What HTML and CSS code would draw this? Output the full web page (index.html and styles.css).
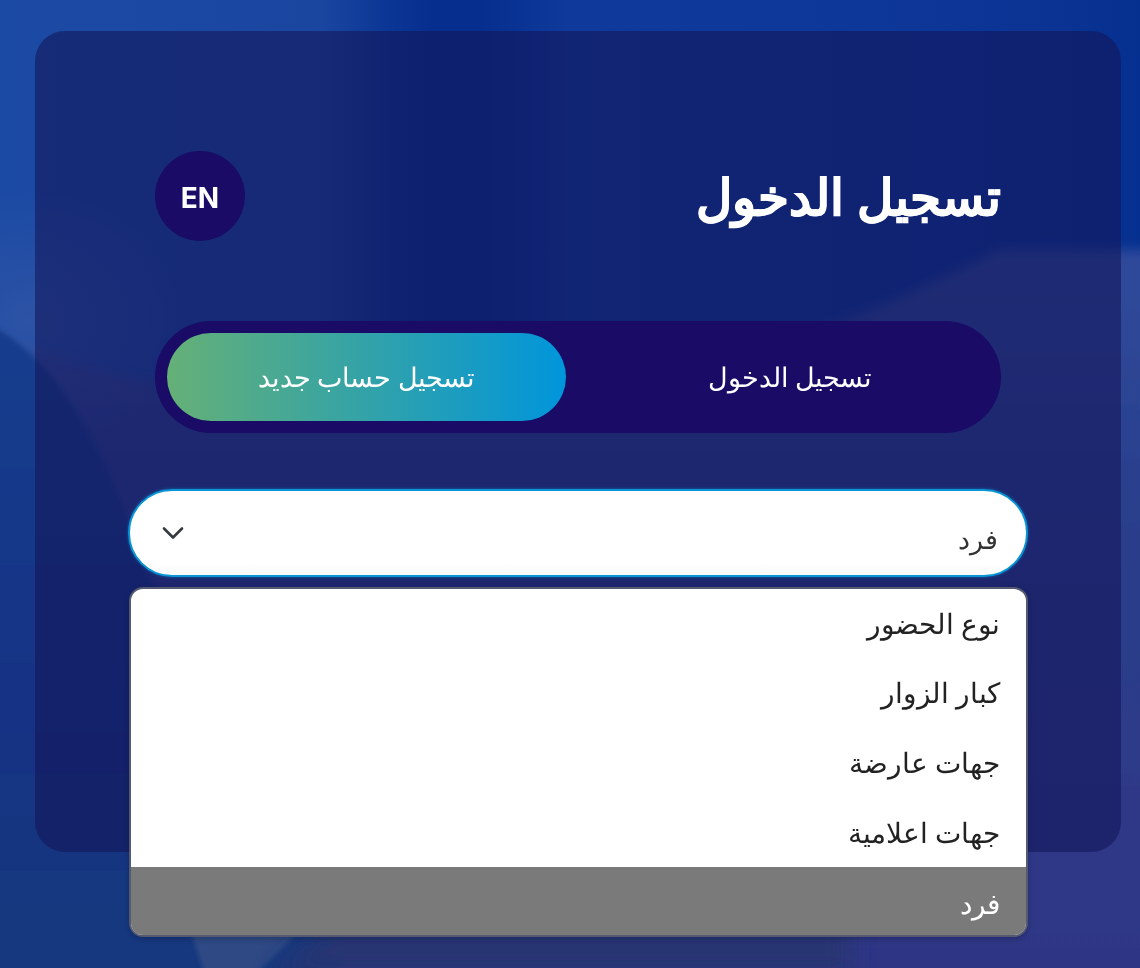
FILE: index.html
```html
<!DOCTYPE html>
<html lang="ar" dir="rtl">
<head>
<meta charset="utf-8">
<title>تسجيل الدخول</title>
<link rel="stylesheet" href="styles.css">
</head>
<body>
<svg class="bg" viewBox="0 0 1140 968" preserveAspectRatio="none" aria-hidden="true">
  <defs>
    <linearGradient id="top">
      <stop offset="0" stop-color="#1b4aa4"/>
      <stop offset=".28" stop-color="#1a46a0"/>
      <stop offset=".34" stop-color="#0c3695"/>
      <stop offset=".38" stop-color="#052e8e"/>
      <stop offset=".42" stop-color="#052e8e"/>
      <stop offset=".5" stop-color="#0f3a9b"/>
      <stop offset=".75" stop-color="#0d3798"/>
      <stop offset=".92" stop-color="#0a3394"/>
      <stop offset="1" stop-color="#06308f"/>
    </linearGradient>
    <linearGradient id="low" gradientUnits="userSpaceOnUse" x1="0" y1="250" x2="0" y2="968">
      <stop offset="0" stop-color="#2e4a9b"/>
      <stop offset=".4" stop-color="#2b3e8b"/>
      <stop offset="1" stop-color="#2f3685"/>
    </linearGradient>
    <linearGradient id="dark" x1="0" y1="0" x2="0" y2="1">
      <stop offset="0" stop-color="#143e8e"/>
      <stop offset=".6" stop-color="#163284"/>
      <stop offset="1" stop-color="#183a7e"/>
    </linearGradient>
    <radialGradient id="glow">
      <stop offset="0" stop-color="#3a5aa6" stop-opacity=".55"/>
      <stop offset="1" stop-color="#3a5aa6" stop-opacity="0"/>
    </radialGradient>
    <filter id="soft"><feGaussianBlur stdDeviation="2"/></filter>
    <filter id="mid" x="-5%" y="-5%" width="110%" height="110%"><feGaussianBlur stdDeviation="6"/></filter>
    <filter id="softer"><feGaussianBlur stdDeviation="12"/></filter>
  </defs>
  <rect width="1140" height="968" fill="url(#top)"/>
  <path d="M1160 250H1000C900 300 800 350 600 385C350 420 150 400 -20 330V990H1160Z" fill="url(#low)" filter="url(#mid)"/>
  <ellipse cx="30" cy="320" rx="150" ry="130" fill="url(#glow)"/>
  <path d="M-10 325C40 350 85 410 120 500C170 640 240 780 340 900L345 980H-10Z" fill="url(#dark)" filter="url(#soft)"/>
  <path d="M190 930H300L255 975H205Z" fill="#2f4a84" filter="url(#soft)"/>
  <path d="M330 925H850V975H270Z" fill="#273672" filter="url(#softer)"/>
</svg>
<main class="card">
  <header class="head">
    <h1 class="title">تسجيل الدخول</h1>
    <button class="lang" type="button">EN</button>
  </header>
  <div class="tabs">
    <button class="tab" type="button">تسجيل الدخول</button>
    <button class="tab tab-active" type="button">تسجيل حساب جديد</button>
  </div>
  <div class="field">
    <div class="select">
      <span class="value">فرد</span>
      <svg class="chev" width="24" height="24" viewBox="0 0 24 24" fill="none" stroke="#343a40" stroke-width="2.6" stroke-linecap="round" stroke-linejoin="round"><path d="M3 7.5l9 9 9-9"/></svg>
    </div>
    <ul class="menu">
      <li>نوع الحضور</li>
      <li>كبار الزوار</li>
      <li>جهات عارضة</li>
      <li>جهات اعلامية</li>
      <li class="sel">فرد</li>
    </ul>
  </div>
</main>
</body>
</html>
```
FILE: styles.css
```css
* { box-sizing: border-box; }
html, body { margin: 0; height: 968px; overflow: hidden; }
body {
  font-family: "Noto Sans", "Liberation Sans", sans-serif;
  padding: 31px 19px 0 35px;
}
.bg { position: fixed; left: 0; top: 0; width: 1140px; height: 968px; z-index: -1; }
.card {
  position: relative;
  height: 821px;
  border-radius: 30px;
  background: rgba(19, 21, 88, .57);
  padding: 120px 120px 0;
}
.head { display: flex; justify-content: space-between; align-items: center; height: 90px; }
.title { margin: 0; font-size: 50px; font-weight: 700; color: #fff; -webkit-text-stroke: .7px #fff; }
.lang {
  width: 90px; height: 90px; border: 0; border-radius: 50%; padding: 3px 0 0;
  background: #190b66; color: #fff; font: 700 28px "Inter", sans-serif;
}
.tabs {
  display: flex; margin-top: 80px; height: 112px; padding: 12px;
  border-radius: 56px; background: #190b66;
}
.tab {
  border: 0; border-radius: 44px; background: transparent;
  color: #fff; font: 400 26.6px "Noto Sans", sans-serif;
  flex: 0 0 423px; padding: 0 0 0 25px;
}
.tab-active {
  flex: 0 0 399px; padding: 0;
  background: linear-gradient(90deg, #65b076 0%, #0095db 100%);
}
.field { margin: 56px -27px 0; }
.select {
  display: flex; justify-content: space-between; align-items: center;
  height: 88px; padding: 0 28px 0 31px;
  border: 2px solid #0a95d5; border-radius: 44px;
  background: linear-gradient(180deg, #fff 85%, #f9f9f9 100%);
  box-shadow: 0 0 3px rgba(10, 150, 220, .6);
  color: #333; font-size: 26.6px;
}
.value { padding-top: 11px; }
.menu {
  position: absolute; left: 94px; right: 93px; top: 556px;
  list-style: none; margin: 0; padding: 0; overflow: hidden;
  background: #fff; border: 2px solid #555a70; border-radius: 14px;
  box-shadow: 0 2px 6px rgba(0, 0, 0, .2);
  color: #222; font-size: 28px;
}
.menu li { height: 70px; padding: 0 26px; display: flex; align-items: center; }
.menu li:first-child { height: 68px; }
.menu .sel { height: 68px; padding-top: 4px; background: #7a7a7a; color: #fff; }
```
